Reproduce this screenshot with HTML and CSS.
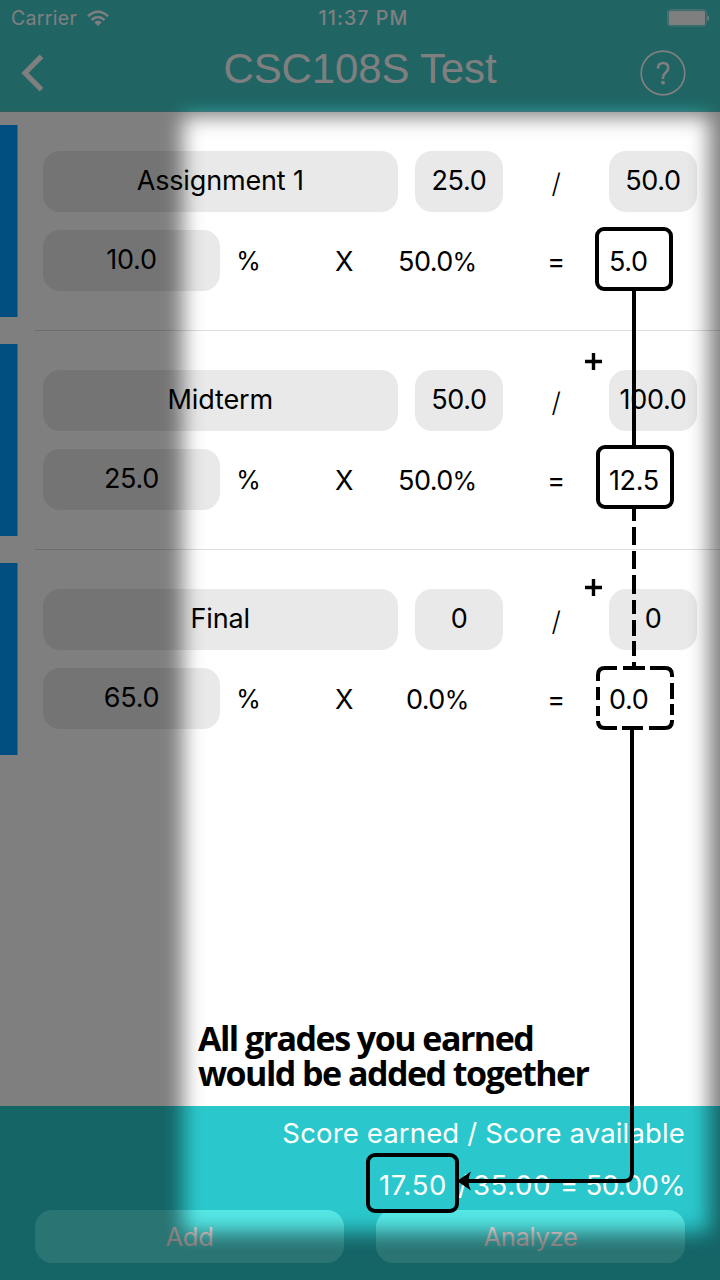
FILE: index.html
```html
<!DOCTYPE html>
<html lang="en">
<head>
<meta charset="utf-8">
<title>CSC108S Test</title>
<link rel="stylesheet" href="styles.css">
</head>
<body>
<div class="screen">
  <header class="header">
    <div class="status">
      <div class="carrier"><span>Carrier</span>
        <svg class="wifi" width="22" height="17" viewBox="0 0 22 17" fill="none" stroke="#fff" stroke-width="2.5"><path d="M1 6.2Q11-2.8 21 6.2M4.5 10Q11 4 17.500 10"/><path d="M7.3 12.2Q11 9.4 14.7 12.2L11 16Z" fill="#fff" stroke="none"/></svg>
      </div>
      <div class="time">11:37 PM</div>
      <svg class="battery" width="43" height="18" viewBox="0 0 43 18"><rect x=".6" y=".6" width="38.6" height="16.4" rx="2.5" fill="none" stroke="#fff" stroke-opacity=".5"/><rect x="1.7" y="1.7" width="36.3" height="14.2" rx="1.5" fill="#fff"/><path d="M40.3 6.2Q42 6.6 42 9Q42 11.4 40.3 11.8Z" fill="#fff"/></svg>
    </div>
    <div class="nav">
      <svg class="back" width="24" height="38" viewBox="0 0 24 38"><path d="M21.500 2.300L5 19L21.500 35.700" fill="none" stroke="#fff" stroke-width="5.200"/></svg>
      <h1 class="title">CSC108S Test</h1>
      <svg class="help" width="46" height="46" viewBox="0 0 46 46" fill="none" stroke="#fff"><circle cx="23" cy="23" r="21.800" stroke-width="1.700"/><path d="M18 18.500Q18 13 23.200 13Q28.200 13 28.200 18Q28.200 20.500 25.700 22.500Q23 24.700 23 27.500V29" stroke-width="2.600"/><circle cx="23" cy="32.700" r="1.900" fill="#fff" stroke="none"/></svg>
    </div>
  </header>

  <main class="list">
    <section class="item">
      <div class="bar"></div>
      <div class="fields">
        <div class="row score"><div class="pill name">Assignment 1</div><div class="pill">25.0</div><div class="op slash">/</div><div class="pill">50.0</div></div>
        <div class="row weight"><div class="pill">10.0</div><div class="op unit">%</div><div class="op times">X</div><div class="op share">50.0<span class="unit">%</span></div><div class="op equals">=</div><div class="result">5.0</div></div>
      </div>
    </section>
    <section class="item">
      <div class="bar"></div>
      <div class="fields">
        <div class="row score"><div class="pill name">Midterm</div><div class="pill">50.0</div><div class="op slash">/</div><div class="pill">100.0</div></div>
        <div class="row weight"><div class="pill">25.0</div><div class="op unit">%</div><div class="op times">X</div><div class="op share">50.0<span class="unit">%</span></div><div class="op equals">=</div><div class="result">12.5</div></div>
      </div>
    </section>
    <section class="item">
      <div class="bar"></div>
      <div class="fields">
        <div class="row score"><div class="pill name">Final</div><div class="pill">0</div><div class="op slash">/</div><div class="pill">0</div></div>
        <div class="row weight"><div class="pill">65.0</div><div class="op unit">%</div><div class="op times">X</div><div class="op share">0.0<span class="unit">%</span></div><div class="op equals">=</div><div class="result">0.0</div></div>
      </div>
    </section>
  </main>

  <footer class="footer">
    <div class="caption">Score earned / Score available</div>
    <div class="totals"><span>17.50</span><span>/</span><span>35.00</span><span>=</span><span class="percent">50.00%</span></div>
    <div class="buttons"><div class="button">Add</div><div class="button">Analyze</div></div>
  </footer>

  <svg class="overlay" width="720" height="1280" viewBox="0 0 720 1280">
    <defs><filter id="soft" filterUnits="userSpaceOnUse" x="-60" y="-60" width="840" height="1400"><feGaussianBlur stdDeviation="10"/></filter></defs>
    <path d="M-100-100H820V1380H-100ZM183 117V1232H709V117Z" fill="#000" fill-opacity=".5" fill-rule="evenodd" filter="url(#soft)"/>
    <g fill="none" stroke="#000" stroke-width="4">
      <rect x="597" y="229" width="74" height="60" rx="7"/>
      <path d="M634 290V446"/>
      <rect x="598" y="447" width="74" height="60" rx="7"/>
      <path d="M634 509V521M634 527V545M634 551V569M634 575V594M634 600V614M634 620V636M634 641V656M634 662V668"/>
      <path d="M598 677V675Q598 668 605 668H617M623 668H645M650 668H665Q672 668 672 675V677M672 683V699M672 704V715M672 720V721Q672 728 665 728H649M643 728H622M617 728H605Q598 728 598 721M598 716V706M598 700V687M598 681V675"/>
      <path d="M632 729V1173Q632 1181 624 1181H466"/>
      <rect x="368" y="1155" width="89" height="56" rx="7"/>
      <path d="M593.500 353V370M585 361.500H602M593.500 579V596M585 587.500H602" stroke-width="3.400"/>
    </g>
    <path d="M457 1181L471 1171.500Q466 1181 471 1190.500Z"/>
  </svg>
  <div class="callout"><div>All grades you earned</div><div>would be added together</div></div>
</div>
</body>
</html>
```
FILE: styles.css
```css
body { margin: 0; }
.screen {
  position: relative;
  display: flex;
  flex-direction: column;
  width: 720px;
  height: 1280px;
  overflow: hidden;
  background: #fff;
  color: #000;
  font-family: Inter, "Liberation Sans", sans-serif;
  font-size: 27px;
}
.header { height: 112px; background: #40c8c8; color: #fff; border-bottom: 1px solid #62b6b7; box-sizing: border-box; }
.status { display: grid; grid-template-columns: 1fr auto 1fr; height: 36px; padding: 0 10px 0 11px; align-items: center; font-size: 19.5px; }
.carrier { display: flex; align-items: center; gap: 10px; }
.carrier span { letter-spacing: 0.300px; }
.time { margin-left: 6px; font-weight: 500; font-size: 19.500px; letter-spacing: 1.100px; }
.battery { justify-self: end; }
.nav { display: flex; justify-content: space-between; align-items: center; height: 74px; padding: 0 34px 0 20px; }
.title { margin: -8px 0 0 36px; font: 400 42px "Liberation Sans", Arial, sans-serif; letter-spacing: -0.15px; }

.list { flex: 1; }
.item { position: relative; display: flex; height: 219px; padding-top: 13px; box-sizing: border-box; }
.item + .item::before { content: ""; position: absolute; left: 35px; right: 0; top: -1px; height: 1px; background: #ddd; }
.bar { width: 18px; height: 192px; background: #009bff; border-right: 1px solid #8cc8f5; box-sizing: border-box; }
.fields { display: flex; flex-direction: column; gap: 18px; padding: 26px 0 0 25px; }
.row { display: grid; height: 61px; align-items: center; white-space: nowrap; }
.score { grid-template-columns: 354.500px 17.500px 88px 106px 88px; }
.score > :nth-child(2) { grid-column: 3; }
.weight { grid-template-columns: 177px 56px 136px 50px 41px 106px 88px; }
.weight > :nth-child(5) { grid-column: 6; }
.weight > :nth-child(6) { grid-column: 7; }
.pill { height: 61px; line-height: 59px; border-radius: 17px; background: #e9e9e9; text-align: center; letter-spacing: -0.3px; }
.name { letter-spacing: -0.15px; }
.op { display: flex; justify-content: center; align-items: baseline; letter-spacing: -0.3px; padding-top: 1px; }
.share { letter-spacing: -0.600px; }
.unit { font-size: 25px; letter-spacing: -1.200px; }
.slash { padding-top: 4px; font-weight: 300; }
.result { padding-top: 1px; letter-spacing: -0.4px; }

.footer { height: 174px; background: #2ac8cc; color: #fff; box-sizing: border-box; padding: 0 35px 18px; }
.caption, .totals { height: 52px; line-height: 54px; font-weight: 400; font-size: 27.500px; white-space: nowrap; }
.caption { text-align: right; letter-spacing: 0.150px; }
.totals { display: grid; grid-template-columns: 79px 15px 87px 22px 103px; justify-content: end; line-height: 55px; letter-spacing: 0.600px; }
.percent { letter-spacing: -0.450px; text-align: right; }
.buttons { display: grid; grid-template-columns: 309px 309px; justify-content: space-between; }
.button { height: 53px; line-height: 53px; border-radius: 17px; background: #54e8e6; color: #ffecec; text-align: center; font-size: 25.500px; font-weight: 400; letter-spacing: -0.300px; }

.overlay { position: absolute; inset: 0; }
.callout { position: absolute; left: 198px; top: 1021px; font: 700 34px/35px "Open Sans", "Noto Sans", sans-serif; letter-spacing: -1.520px; white-space: nowrap; }
```
